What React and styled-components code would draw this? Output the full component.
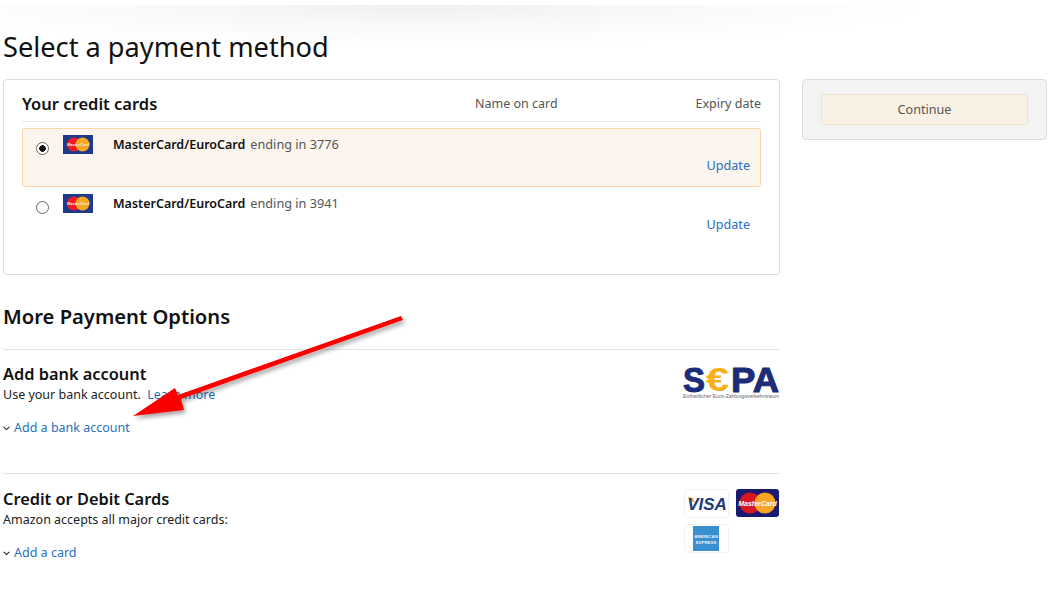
import styled, { createGlobalStyle } from "styled-components";

const GlobalStyle = createGlobalStyle`
  html, body {
    margin: 0;
    padding: 0;
    background: #fff;
    color: #111;
    font-family: "Noto Sans", "Open Sans", Arial, sans-serif;
    overflow: hidden;
  }
`;

const Page = styled.div`
  position: relative;
  width: 1054px;
  height: 591px;
  overflow: hidden;
`;

const TopBand = styled.header`
  height: 79px;
  box-sizing: border-box;
  padding: 27px 0 0 3px;
  background:
    linear-gradient(#fff 0, #fff 5px, transparent 5px),
    radial-gradient(ellipse 500px 40px at 420px 5px, #efefef 0, #f8f8f8 45%, #fff 100%);
`;

const Title = styled.h1`
  margin: 0;
  font-size: 27.2px;
  font-weight: 400;
  line-height: 40px;
  color: #111;
`;

const Columns = styled.div`
  display: flex;
  align-items: flex-start;
  gap: 22px;
  padding-left: 3px;
`;

const Main = styled.main`
  width: 777px;
`;

const Side = styled.aside`
  width: 245px;
  height: 61px;
  box-sizing: border-box;
  padding: 14px 18px;
  background: #f3f3f3;
  border: 1px solid #ddd;
  border-radius: 4px;
`;

const ContinueButton = styled.button`
  display: block;
  width: 100%;
  height: 31px;
  padding: 0;
  background: #f9f2e4;
  border: 1px solid #ede4cf;
  border-radius: 3px;
  color: #555;
  font: 400 12.6px/29px "Noto Sans", Arial, sans-serif;
`;

const CardBox = styled.section`
  height: 196px;
  box-sizing: border-box;
  padding: 0 18px;
  border: 1px solid #ddd;
  border-radius: 4px;
`;

const TableHead = styled.div`
  display: grid;
  grid-template-columns: 1fr 180px 100px;
  align-items: center;
  height: 41px;
  box-sizing: content-box;
  border-bottom: 1px solid #e7e7e7;
  font-size: 12.5px;
  color: #555;
`;

const CardsTitle = styled.h2`
  margin: 5px 0 0;
  font-size: 16.5px;
  font-weight: 600;
  color: #111;
`;

const HeadName = styled.span`
  margin: 5px 0 0 -6px;
`;

const HeadExpiry = styled.span`
  margin-top: 5px;
  text-align: right;
`;

const Rows = styled.div`
  margin-top: 6px;
`;

const CardRow = styled.div`
  position: relative;
  display: flex;
  height: 59px;
  box-sizing: border-box;
  padding: 6px 10px 0 13px;
  border: 1px solid ${(p) => (p.$active ? "#fbd8a3" : "transparent")};
  border-radius: 3px;
  background: ${(p) => (p.$active ? "#fcf5ee" : "transparent")};
`;

const Radio = styled.span`
  flex: none;
  width: 13px;
  height: 13px;
  box-sizing: border-box;
  margin-top: 7px;
  border: 1px solid #666;
  border-radius: 50%;
  background: ${(p) => (p.$on ? "radial-gradient(circle, #111 0, #111 3px, #fff 3.6px)" : "#fff")};
`;

const MiniLogo = styled.svg`
  flex: none;
  width: 30px;
  height: 19px;
  margin-left: 14px;
`;

const CardText = styled.div`
  margin-left: 20px;
  font-size: 12.7px;
  line-height: 18px;
  color: #555;
`;

const CardBrand = styled.b`
  font-size: 12.5px;
  font-weight: 600;
  color: #111;
  margin-right: 5px;
`;

const UpdateLink = styled.a`
  position: absolute;
  right: 10px;
  top: 28px;
  font-size: 12.6px;
  line-height: 18px;
  color: #2a6fbb;
`;

const MoreTitle = styled.h2`
  margin: 0;
  padding-top: 27px;
  height: 75px;
  box-sizing: border-box;
  line-height: 28px;
  font-size: 20.2px;
  font-weight: 600;
  color: #111;
  border-bottom: 1px solid #e3e3e3;
`;

const Option = styled.section`
  display: flex;
  justify-content: space-between;
  height: ${(p) => p.$height}px;
  box-sizing: border-box;
  padding-top: ${(p) => p.$top}px;
  border-bottom: ${(p) => (p.$last ? "none" : "1px solid #e3e3e3")};
`;

const OptionTitle = styled.h3`
  margin: 0;
  font-size: 16.35px;
  line-height: 22px;
  font-weight: 600;
  color: #111;
`;

const OptionText = styled.p`
  margin: 1px 0 0;
  font-size: 12.5px;
  line-height: 18px;
  color: #222;
`;

const TextLink = styled.a`
  color: #1f6fb5;
`;

const Expander = styled.div`
  display: flex;
  align-items: center;
  gap: 4px;
  margin-top: 15px;
  font-size: 12.5px;
  line-height: 18px;
  color: #2a6fbb;
`;

const Logos = styled.div`
  display: grid;
  grid-template-columns: 45px 43px;
  gap: 6px 7px;
  align-content: start;
  margin-top: 1px;
  margin-right: 1px;
  height: 64px;
`;

const LogoTile = styled.svg`
  display: block;
`;

const SepaLogo = styled.svg`
  display: block;
  flex: none;
  margin-top: -6px;
`;

const ArrowLayer = styled.svg`
  position: absolute;
  left: 0;
  top: 0;
  pointer-events: none;
`;

function MasterCard() {
  return (
    <>
      <rect width="30" height="19" fill="#1f3a8a" />
      <circle cx="11" cy="9.5" r="7" fill="#ee1c25" />
      <circle cx="19.5" cy="9.5" r="7" fill="#f7a823" />
      <text x="15" y="11" textAnchor="middle" fontFamily="Liberation Sans" fontStyle="italic" fontWeight="700" fontSize="4" fill="#f3e9e0">MasterCard</text>
    </>
  );
}

function Chevron() {
  return (
    <svg width="7" height="5" viewBox="0 0 7 5">
      <path d="M0.6 0.8 L3.5 3.6 L6.4 0.8" fill="none" stroke="#222" strokeWidth="1.1" />
    </svg>
  );
}

const cards = [
  { ending: "3776", active: true },
  { ending: "3941", active: false },
];

export default function App() {
  return (
    <Page>
      <GlobalStyle />
      <TopBand>
        <Title>Select a payment method</Title>
      </TopBand>
      <Columns>
        <Main>
          <CardBox>
            <TableHead>
              <CardsTitle>Your credit cards</CardsTitle>
              <HeadName>Name on card</HeadName>
              <HeadExpiry>Expiry date</HeadExpiry>
            </TableHead>
            <Rows>
              {cards.map((c) => (
                <CardRow key={c.ending} $active={c.active}>
                  <Radio $on={c.active} />
                  <MiniLogo viewBox="0 0 30 19">
                    <MasterCard />
                  </MiniLogo>
                  <CardText>
                    <CardBrand>MasterCard/EuroCard</CardBrand>
                    ending in {c.ending}
                  </CardText>
                  <UpdateLink>Update</UpdateLink>
                </CardRow>
              ))}
            </Rows>
          </CardBox>

          <MoreTitle>More Payment Options</MoreTitle>

          <Option $height={124} $top={13}>
            <div>
              <OptionTitle>Add bank account</OptionTitle>
              <OptionText>
                Use your bank account.&nbsp; <TextLink>Learn more</TextLink>
              </OptionText>
              <Expander>
                <Chevron />
                Add a bank account
              </Expander>
            </div>
            <SepaLogo width="97" height="44" viewBox="0 -6 97 44">
              <text x="0" y="29" fontFamily="Liberation Sans" fontWeight="700" fontSize="35" fill="#1b2c78" stroke="#1b2c78" strokeWidth="1" textLength="22" lengthAdjust="spacingAndGlyphs">S</text>
              <text x="23" y="28" fontFamily="Liberation Sans" fontWeight="700" fontSize="33" fill="#f5b01c" textLength="23" lengthAdjust="spacingAndGlyphs">€</text>
              <text x="48" y="29" fontFamily="Liberation Sans" fontWeight="700" fontSize="35" fill="#1b2c78" stroke="#1b2c78" strokeWidth="1" textLength="48" lengthAdjust="spacingAndGlyphs">PA</text>
              <text x="0" y="35" fontFamily="Liberation Sans" fontSize="4.7" fill="#666" textLength="96" lengthAdjust="spacingAndGlyphs">Einheitlicher Euro-Zahlungsverkehrsraum</text>
            </SepaLogo>
          </Option>

          <Option $height={118} $top={14} $last>
            <div>
              <OptionTitle>Credit or Debit Cards</OptionTitle>
              <OptionText>Amazon accepts all major credit cards:</OptionText>
              <Expander>
                <Chevron />
                Add a card
              </Expander>
            </div>
            <Logos>
              <LogoTile width="45" height="29" viewBox="0 0 45 29">
                <rect x="0.5" y="0.5" width="44" height="28" rx="3" fill="#fff" stroke="#f0f0f0" />
                <path d="M3 8 L9 9 L11 14 Z" fill="#f0a530" />
                <text x="23" y="20.5" textAnchor="middle" fontFamily="Liberation Sans" fontStyle="italic" fontWeight="700" fontSize="17" fill="#1a3a7c">VISA</text>
              </LogoTile>
              <LogoTile width="43" height="28" viewBox="0 0 43 28">
                <rect width="43" height="28" rx="3" fill="#1a1a70" />
                <circle cx="14" cy="14" r="10.5" fill="#d81820" />
                <circle cx="29" cy="14" r="10.5" fill="#f6a623" />
                <text x="21.5" y="17" textAnchor="middle" fontFamily="Liberation Sans" fontStyle="italic" fontWeight="700" fontSize="7" fill="#fff">MasterCard</text>
              </LogoTile>
              <LogoTile width="45" height="29" viewBox="0 0 45 29">
                <rect x="0.5" y="0.5" width="44" height="28" rx="3" fill="#fff" stroke="#f0f0f0" />
                <rect x="9" y="2" width="26" height="25" fill="#3a8fd0" />
                <text x="22" y="13.5" textAnchor="middle" fontFamily="Liberation Sans" fontWeight="700" fontSize="4.4" fill="#e8f3fb">AMERICAN</text>
                <text x="22" y="20" textAnchor="middle" fontFamily="Liberation Sans" fontWeight="700" fontSize="4.4" fill="#e8f3fb">EXPRESS</text>
              </LogoTile>
            </Logos>
          </Option>
        </Main>
        <Side>
          <ContinueButton>Continue</ContinueButton>
        </Side>
      </Columns>

      <ArrowLayer width="1054" height="591" viewBox="0 0 1054 591">
        <defs>
          <filter id="arrow-shadow" x="-10%" y="-10%" width="120%" height="130%">
            <feDropShadow dx="2" dy="3" stdDeviation="2" floodColor="#000" floodOpacity="0.35" />
          </filter>
        </defs>
        <path
          d="M401 316 L403 320 L181 399 L184 410 L133 416 L175 388 L178 395 Z"
          fill="#fb0000"
          filter="url(#arrow-shadow)"
        />
      </ArrowLayer>
    </Page>
  );
}
